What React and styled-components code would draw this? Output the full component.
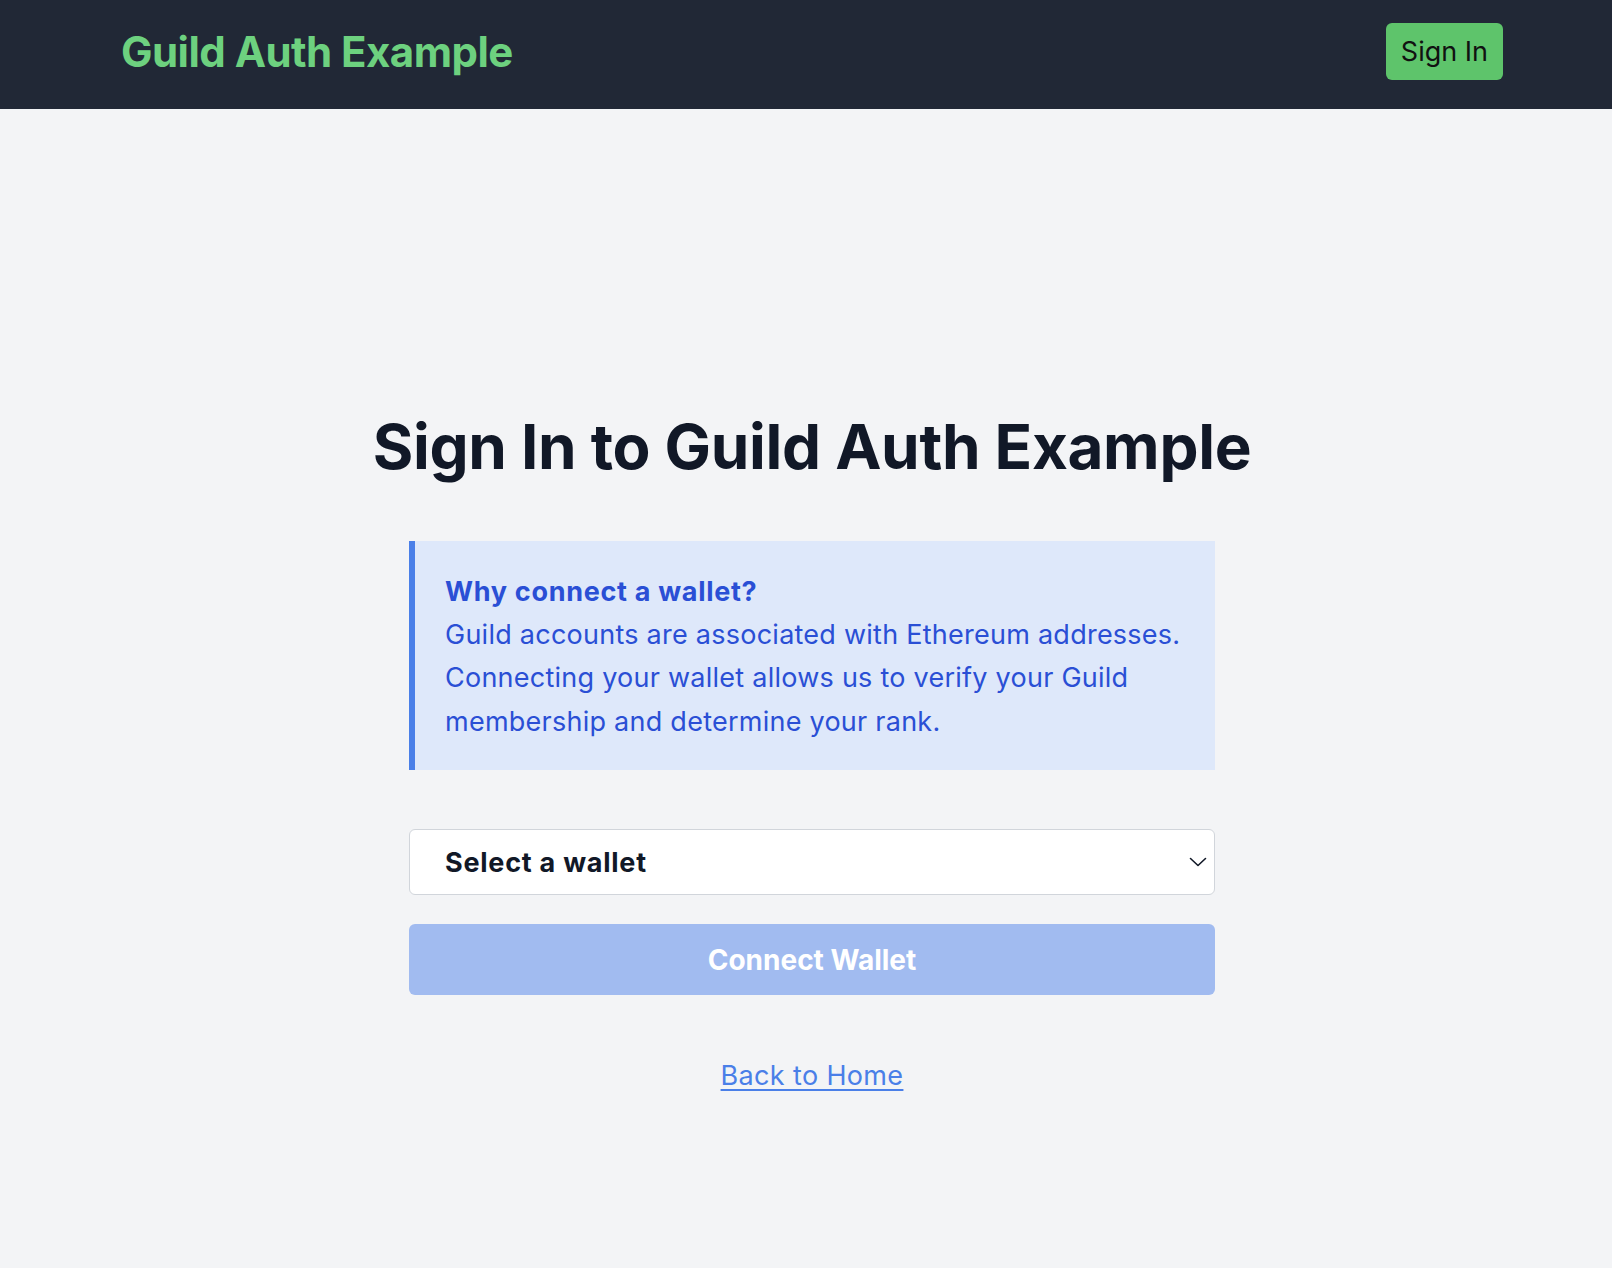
import React from "react";
import styled, { createGlobalStyle } from "styled-components";

const Global = createGlobalStyle`
  html, body { margin: 0; padding: 0; }
  body {
    background: #f3f4f6;
    font-family: Inter, "Noto Sans", "Liberation Sans", sans-serif;
    color: #111827;
  }
  * { box-sizing: border-box; }
`;

const Page = styled.div`
  min-height: 1268px;
  background: #f3f4f6;
`;

const Header = styled.header`
  height: 109px;
  background: #212836;
  display: flex;
  align-items: center;
  justify-content: space-between;
  padding: 0 109px 6px 121px;
`;

const Brand = styled.a`
  font-size: 42px;
  font-weight: 700;
  color: #6dd17f;
  text-decoration: none;
  letter-spacing: -0.53px;
`;

const NavButton = styled.button`
  background: #5ec46b;
  color: #111;
  border: none;
  border-radius: 6px;
  font-family: inherit;
  font-size: 27px;
  line-height: 41px;
  padding: 8px 15px;
  cursor: pointer;
`;

const Main = styled.main`
  display: flex;
  flex-direction: column;
  align-items: center;
  padding: 301px 0 0 12px;
`;

const Title = styled.h1`
  margin: 0;
  font-size: 62px;
  line-height: 74px;
  font-weight: 700;
  color: #111827;
  letter-spacing: -0.32px;
`;

const Card = styled.div`
  width: 806px;
  margin-top: 57px;
  display: flex;
  flex-direction: column;
`;

const InfoBox = styled.div`
  background: #dee8fa;
  border-left: 6px solid #4a7fe8;
  padding: 30px 30px 27px 30px;
  color: #2a4fd5;
  font-size: 27px;
  line-height: 43.5px;
  letter-spacing: 0.25px;
`;

const InfoTitle = styled.p`
  margin: 0;
  font-weight: 700;
  line-height: 41.5px;
  letter-spacing: 0.7px;
`;

const InfoText = styled.p`
  margin: 0;
`;

const SelectWrap = styled.div`
  position: relative;
  margin-top: 59px;
`;

const Select = styled.select`
  width: 100%;
  height: 66px;
  appearance: none;
  background: #fff;
  border: 1px solid #d1d5db;
  border-radius: 6px;
  padding: 0 40px 0 35px;
  font-family: inherit;
  font-size: 27px;
  font-weight: 700;
  letter-spacing: 0.75px;
  color: #111827;
  outline: none;
`;

const Chevron = styled.svg`
  position: absolute;
  right: 8px;
  top: 50%;
  transform: translateY(-50%);
  pointer-events: none;
`;

const ConnectButton = styled.button`
  margin-top: 29px;
  height: 71px;
  width: 100%;
  border: none;
  border-radius: 6px;
  background: #a1bbf0;
  color: #fff;
  font-family: inherit;
  font-size: 28px;
  font-weight: 700;
  cursor: not-allowed;
`;

const BackLink = styled.a`
  margin-top: 61px;
  align-self: center;
  font-size: 27px;
  line-height: 40px;
  letter-spacing: 0.35px;
  color: #4a7fe8;
  text-decoration: underline;
  text-underline-offset: 4px;
`;

export default function App() {
  return (
    <Page>
      <Global />
      <Header>
        <Brand href="#">Guild Auth Example</Brand>
        <NavButton>Sign In</NavButton>
      </Header>
      <Main>
        <Title>Sign In to Guild Auth Example</Title>
        <Card>
          <InfoBox>
            <InfoTitle>Why connect a wallet?</InfoTitle>
            <InfoText>
              Guild accounts are associated with Ethereum addresses. Connecting your wallet allows us to verify
              your Guild membership and determine your rank.
            </InfoText>
          </InfoBox>
          <SelectWrap>
            <Select defaultValue="">
              <option value="">Select a wallet</option>
            </Select>
            <Chevron width="18" height="10" viewBox="0 0 18 10" fill="none">
              <path d="M1.5 1.5 L9 8.5 L16.5 1.5" stroke="#111827" strokeWidth="1.6" strokeLinecap="round" strokeLinejoin="round" />
            </Chevron>
          </SelectWrap>
          <ConnectButton disabled>Connect Wallet</ConnectButton>
          <BackLink href="#">Back to Home</BackLink>
        </Card>
      </Main>
    </Page>
  );
}
